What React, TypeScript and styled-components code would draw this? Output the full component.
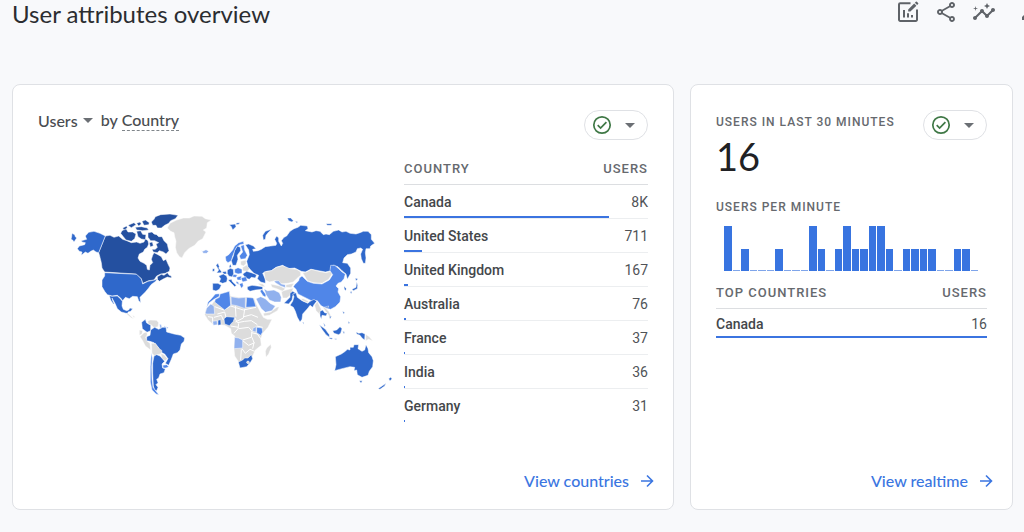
import React from "react";
import styled, { createGlobalStyle } from "styled-components";
import { MdInsights, MdOutlineShare } from "react-icons/md";

const GlobalStyle = createGlobalStyle`
  *, *::before, *::after { box-sizing: border-box; }
  body {
    margin: 0;
    background: #f8f9fb;
    color: #3c4043;
    font-family: Roboto, "Liberation Sans", sans-serif;
    font-size: 14px;
    overflow-x: hidden;
  }
  button { font: inherit; color: inherit; cursor: pointer; }
`;

const display = `font-family: "Google Sans", Lato, sans-serif;`;

const Page = styled.div`
  padding: 0 11px 22px 12px;
`;

const Header = styled.header`
  display: flex;
  justify-content: space-between;
  align-items: flex-start;
  height: 84px;
`;

const Title = styled.h1`
  ${display}
  margin: 0;
  font-size: 24px;
  line-height: 28px;
  font-weight: 400;
  color: #2b2d30;
`;

const Toolbar = styled.div`
  display: flex;
  gap: 12px;
  margin-right: -22px;
`;

const ToolButton = styled.button`
  display: block;
  width: 26px;
  height: 24px;
  padding: 0;
  border: 0;
  background: none;
  color: #5f6368;
  svg { display: block; width: 26px; height: 24px; }
`;

const Cards = styled.main`
  display: grid;
  grid-template-columns: minmax(0, 662fr) minmax(0, 323fr);
  gap: 16px;
`;

const Card = styled.section`
  display: flex;
  flex-direction: column;
  min-height: 426px;
  padding: 25px 25px 16px;
  background: #fff;
  border: 1px solid #dfe1e5;
  border-radius: 8px;
`;

const CardHead = styled.div`
  display: flex;
  justify-content: space-between;
  align-items: flex-start;
`;

const Heading = styled.h2`
  ${display}
  display: flex;
  margin: 0;
  font-size: 16px;
  line-height: 20px;
  font-weight: 500;
  color: #494c50;
`;

const MetricButton = styled.button`
  display: flex;
  align-items: center;
  gap: 5px;
  margin-right: 8px;
  padding: 0;
  border: 0;
  background: none;
`;

const Dimension = styled.span`
  margin-left: 4px;
  border-bottom: 1px dashed #80868b;
`;

const Caret = styled.span`
  width: 0;
  height: 0;
  border: 5px solid transparent;
  border-top-color: #6b6f74;
  border-bottom: 0;
`;

const StatusButton = styled.button`
  display: flex;
  align-items: center;
  justify-content: space-between;
  width: 64px;
  height: 30px;
  padding: 0 12px 0 7px;
  border: 1px solid #dfe1e5;
  border-radius: 15px;
  background: #fff;
  svg { display: block; }
`;

const Body = styled.div`
  display: flex;
  justify-content: space-between;
  align-items: flex-start;
  flex: 1;
  margin-top: 14px;
`;

const MapBox = styled.div`
  flex: 1;
  padding: 46px 4px 0 22px;
  svg { display: block; width: 100%; height: auto; }
`;

const Table = styled.table<{ $width: string }>`
  width: ${(p) => p.$width};
  border-collapse: separate;
  border-spacing: 0;
`;

const labelText = `
  line-height: 16px;
  font-weight: 500;
  letter-spacing: 1px;
  color: #66696e;
  text-transform: uppercase;
`;

const HeadCell = styled.th<{ $end?: boolean }>`
  ${labelText}
  font-size: 13px;
  height: 31px;
  padding: 0;
  text-align: ${(p) => (p.$end ? "right" : "left")};
  border-bottom: 1px solid #dcdee1;
`;

const Row = styled.tr<{ $height: number }>`
  position: relative;
  height: ${(p) => p.$height}px;
  th, td { padding: 0; border-bottom: 1px solid #eceef0; }
  &:last-child th, &:last-child td { border-color: transparent; }
`;

const NameCell = styled.th`
  text-align: left;
  font-weight: 500;
  color: #44474b;
`;

const ValueCell = styled.td`
  text-align: right;
  color: #505357;
`;

const Bar = styled.span`
  position: absolute;
  left: 0;
  bottom: 1px;
  height: 2px;
  min-width: 1px;
  background: #3b74e0;
`;

const Label = styled.h3`
  ${labelText}
  font-size: 12px;
  margin: 0;
`;

const Metric = styled.div`
  ${display}
  font-size: 38px;
  line-height: 52px;
  color: #202124;
`;

const Realtime = styled.div`
  padding-top: 4px;
  padding-bottom: 17px;
`;

const Minutes = styled.div`
  display: flex;
  align-items: flex-end;
  gap: 1px;
  height: 45px;
  margin: 11px 9px 7px 8px;
`;

const MinuteBar = styled.span<{ $users: number }>`
  flex: 1;
  height: ${(p) => (p.$users ? `${p.$users * 50}%` : "1px")};
  background: ${(p) => (p.$users ? "#3874e0" : "#7fa5ea")};
`;

const Footer = styled.footer`
  display: flex;
  justify-content: flex-end;
  margin: auto -6px 0 0;
`;

const FooterLink = styled.a`
  ${display}
  display: flex;
  align-items: center;
  gap: 11px;
  font-size: 16px;
  line-height: 24px;
  font-weight: 500;
  color: #3b76e1;
  text-decoration: none;
  svg { display: block; }
`;

const EditChartIcon = () => (
  <svg viewBox="0 0 24 24" fill="none" stroke="currentColor" strokeWidth="2" aria-hidden="true">
    <path d="M14.5 3.2H4.2a1.2 1.2 0 0 0-1.2 1.2v15.4A1.2 1.2 0 0 0 4.2 21h15.6a1.2 1.2 0 0 0 1.2-1.2V9.5" />
    <path d="M8 10v7.5M12 13.2v4.3M16 15v2.5" />
    <path d="M12.2 11.5v-2l6-6 2.2 2.2-6 5.8z" fill="currentColor" stroke="none" />
    <path d="M18.9 2.8l1-1q.5-.4 1 0l1.2 1.2q.5.5 0 1l-1 1z" fill="currentColor" stroke="none" />
  </svg>
);

const EditIcon = () => (
  <svg viewBox="0 0 24 24" fill="currentColor" aria-hidden="true">
    <path d="M12 20v-3l9-9 3 3-9 9z" />
  </svg>
);

const CheckIcon = () => (
  <svg width="20" height="20" viewBox="0 0 20 20" fill="none" stroke="#3f7846" strokeWidth="1.7" aria-hidden="true">
    <circle cx="10" cy="10" r="8.2" />
    <path d="M5.7 10.2l2.9 2.9 5.8-6" />
  </svg>
);

const ArrowIcon = () => (
  <svg width="14" height="14" viewBox="0 0 14 14" fill="none" stroke="currentColor" strokeWidth="1.6" aria-hidden="true">
    <path d="M1 7h11M7 1.5L12.5 7 7 12.5" />
  </svg>
);

const NAVY = "#2450a0";
const BLUE = "#2f68cb";
const MID = "#5086e8";
const LIGHT = "#91b1ee";
const GREY = "#dcdcdc";

type Region = [fill: string, d: string];

const americas: Region[] = [
  [NAVY, "M136 108L150 106 162 112 176 108 188 118 200 122 214 128 230 126 240 130 252 126 256 116 264 122 266 132 262 142 254 148 250 156 238 162 234 174 240 184 252 190 260 196 262 208 268 210 270 196 278 188 274 178 278 166 282 158 294 164 304 170 310 182 318 178 324 192 330 204 328 214 316 220 302 222 290 228 282 240 266 242 248 250 244 236 228 222 134 216 126 204 124 188 118 164 116 158Z"],
  [NAVY, "M292 230L304 223 312 226 322 218 328 226 334 228 334 234 322 231 308 238 298 244 292 238Z"],
  [NAVY, "M182 100L186 92 198 86 204 96 218 96 228 102 224 116 214 124 198 120 190 110Z"],
  [NAVY, "M204 76L222 68 228 74 214 83ZM230 70L240 66 244 72 236 78ZM246 64L256 60 268 68 266 74 252 76ZM226 82L244 80 262 84 266 90 248 92 230 90ZM230 94L242 92 248 103 258 104 256 119 244 117 234 110ZM268 128L277 126 280 137 271 141ZM188 84L200 78 202 84 192 90Z"],
  [NAVY, "M264 98L276 96 282 102 290 104 296 110 306 110 312 122 322 132 324 142 327 152 318 162 310 156 298 152 292 158 280 156 276 148 286 148 292 142 288 132 296 128 284 122 272 122 264 112Z"],
  [NAVY, "M274 66L282 58 286 50 302 44 330 42 354 46 346 56 332 62 326 70 314 76 304 84 292 84 288 76 278 76Z"],
  [BLUE, "M136 108L120 100 102 94 86 97 76 108 80 118 64 122 66 126 76 128 74 134 58 138 52 146 58 154 66 156 64 166 76 156 84 160 92 154 100 150 108 156 116 158Z"],
  [BLUE, "M36 100L44 104 46 110 50 114 42 126 38 120 33 118 35 110Z"],
  [BLUE, "M134 218L230 223 244 237 248 252 264 244 284 240 292 236 287 244 273 254 266 264 256 276 246 286 240 292 242 308 236 302 232 290 218 289 208 296 196 292 188 302 182 294 172 286 156 288 142 284 134 274 126 260 126 240 134 228Z"],
  [BLUE, "M148 287L156 289 172 288 181 296 187 304 186 318 190 328 200 332 206 330 210 324 218 326 212 334 204 336 203 341 184 336 172 326 166 312 156 294 158 302 163 312 160 312 152 300Z"],
];

const southAmerica: Region[] = [
  [BLUE, "M245 67L256 58 260 69 272 74 272 92 261 97 247 86Z"],
  [GREY, "M263 64L270 60 290 61 296 68 294 80 282 83 274 75 265 72Z"],
  [LIGHT, "M299 72L304 74 306 84 300 84ZM312 77L317 80 314 86ZM318 80L325 82 322 87Z"],
  [GREY, "M238 90L248 92 246 102 238 106ZM244 106L252 98 260 96 262 104 257 112 262 124 270 130 272 150 256 138 248 122 240 110Z"],
  [GREY, "M198 40L206 42 214 50 222 56 214 54 204 46ZM218 46L226 52 220 52Z"],
  [BLUE, "M260 110L270 106 272 90 284 82 296 88 308 82 318 82 320 96 342 102 362 106 374 114 372 124 364 132 360 150 352 158 340 162 334 178 326 196 316 190 324 176 314 162 302 156 296 144 282 128 270 124 260 122Z"],
  [GREY, "M274 130L286 130 298 146 306 152 304 162 292 164 284 168 276 160ZM302 160L312 164 322 176 316 182 306 176Z"],
  [BLUE, "M282 168L290 164 300 168 314 184 306 192 308 204 316 206 312 218 300 222 296 234 290 238 294 248 288 254 294 262 290 272 284 270 280 258 278 220 278 190Z"],
  [MID, "M274 158L277 174 275 200 276 236 279 262 290 276 297 285 288 282 276 270 271 246 271 200Z"],
  [MID, "M308 196L320 194 326 200 318 204 310 204Z"],
];

const europe: Region[] = [
  [GREY, "M-38 84L-30 70 -10 60 10 54 28 54 42 48 66 49 76 56 94 60 82 68 80 84 70 90 78 96 68 116 54 124 44 136 26 146 14 158 6 174 -2 170 -10 158 -14 142 -12 124 -16 110 -18 98 -28 94Z"],
  [LIGHT, "M64 151L68 154 78 149 86 154 80 160 70 160Z"],
  [BLUE, "M148 74L166 72 168 80 158 90 154 80ZM168 69L179 68 178 72 170 74Z"],
  [BLUE, "M250 120L248 106 256 94 276 87 266 96 258 106 256 118Z"],
  [MID, "M138 182L136 170 146 164 158 150 164 138 176 128 190 124 192 132 180 134 170 142 164 154 158 168 154 182 144 188Z"],
  [BLUE, "M158 196L154 182 160 168 164 152 172 138 181 142 182 152 172 166 174 178 168 196Z"],
  [MID, "M182 138L192 134 194 150 202 166 196 176 182 178 178 168 188 156Z"],
  [GREY, "M182 184L198 180 198 192 190 198 182 194ZM188 202L200 195 209 206 202 214 188 212Z"],
  [BLUE, "M188 222L200 214 214 218 230 224 226 234 214 232 208 238 196 234Z"],
  [MID, "M164 208L174 203 186 208 186 220 174 222 164 218Z"],
  [BLUE, "M142 210L151 205 160 208 161 222 157 231 146 228 142 220Z"],
  [BLUE, "M116 228L130 222 140 228 142 236 140 246 128 250 118 246 122 236Z"],
  [BLUE, "M98 250L114 250 124 256 118 268 108 273 98 270Z"],
  [BLUE, "M108 196L114 190 118 200 116 204 124 214 124 218 110 219 116 210ZM98 206L104 206 103 214 97 214ZM148 198L152 192 154 202 148 203Z"],
  [BLUE, "M144 240L154 238 158 246 169 256 164 260 154 250ZM126 216L138 214 140 222 132 222Z"],
  [MID, "M160 223L172 225 168 232 158 231ZM170 232L184 228 184 240 172 240ZM182 234L198 230 202 242 188 246Z"],
  [MID, "M170 244L176 248 176 254 168 248ZM178 252L188 248 190 258 184 265Z"],
  [BLUE, "M202 260L216 256 232 258 248 260 248 268 226 270 210 274 202 268Z"],
  [GREY, "M234 250L248 252 256 260 248 260 238 254Z"],
  [MID, "M240 273L246 268 258 284 256 292 248 286Z"],
  [LIGHT, "M252 266L262 272 282 270 298 278 304 292 302 306 284 306 268 300 258 284Z"],
];

const africa: Region[] = [
  [GREY, "M74 104L78 86 96 72 108 56 124 42 148 34 152 48 176 52 200 52 222 54 230 74 240 94 250 112 262 118 276 118 264 142 248 160 242 178 244 196 226 210 218 228 214 242 200 258 182 262 176 246 164 228 162 208 162 188 164 168 154 160 152 146 134 136 116 134 100 134 84 120Z"],
  [GREY, "M256 214L260 204 272 193 274 202 266 222 258 232ZM250 100L272 96 290 82 298 80 292 92 268 106 252 108Z"],
  [MID, "M120 42L148 34 150 52 152 76 134 90 104 66 106 58 118 52Z"],
  [MID, "M94 56L106 42 118 41 118 49 102 58 88 68 80 82 84 66Z"],
  [LIGHT, "M76 98L80 84 92 72 102 78 104 102 78 102Z"],
  [LIGHT, "M153 50L176 54 196 52 196 86 170 77 154 74Z"],
  [MID, "M200 52L220 54 228 80 198 82Z"],
  [LIGHT, "M228 56L242 50 256 56 270 70 286 78 276 92 256 97 244 86 236 72Z"],
  [BLUE, "M132 116L140 110 164 112 160 124 148 137 134 132Z"],
  [BLUE, "M114 121L122 119 123 134 114 136Z"],
  [LIGHT, "M98 124L111 122 112 134 100 136Z"],
  [MID, "M230 142L246 144 248 156 242 166 230 158Z"],
  [LIGHT, "M219 144L229 140 228 156 218 154Z"],
  [LIGHT, "M164 172L176 174 188 180 188 204 162 206Z"],
  [BLUE, "M175 246L188 240 194 234 204 234 214 224 218 236 212 246 200 260 180 264Z"],
];

const asia: Region[] = [
  [BLUE, "M-74 134L-64 132 -50 138 -42 146 -52 148 -50 154 -36 152 -26 148 -14 140 2 138 18 136 20 130 14 118 20 108 26 114 26 124 34 138 38 130 34 122 42 112 50 108 60 94 72 86 84 82 92 76 112 78 114 86 106 92 126 96 138 92 150 94 160 104 168 102 178 104 190 94 206 90 216 96 228 94 240 100 258 102 270 98 280 94 294 94 304 104 304 118 314 130 302 138 300 146 288 146 286 158 288 174 286 190 280 190 274 176 272 162 278 148 272 144 262 146 258 156 244 162 232 164 222 174 218 188 232 190 242 204 242 220 232 238 228 222 216 212 204 200 190 196 182 202 184 212 166 216 146 212 122 208 106 216 94 214 74 204 54 206 38 196 18 202 4 212 -10 214 -22 220 -14 238 -14 250 -28 246 -38 236 -34 226 -48 220 -58 210 -66 200 -70 184 -62 164 -64 150Z"],
  [BLUE, "M52 54L62 54 70 62 66 66 56 62ZM76 63L84 66 80 69ZM168 71L186 71 184 76 172 76Z"],
  [GREY, "M-18 216L4 212 20 202 38 197 60 206 80 208 92 216 92 226 80 236 70 246 54 250 30 252 16 242 -2 246 -14 240Z"],
  [GREY, "M98 218L110 216 124 208 146 214 168 218 182 214 186 222 176 238 156 250 130 248 112 242Z"],
  [GREY, "M2 252L30 258 46 266 38 274 20 266 6 262ZM34 274L56 268 70 264 64 284 50 294 38 294Z"],
  [LIGHT, "M12 243L26 242 34 252 46 254 46 263 32 258 16 248Z"],
  [GREY, "M48 254L72 250 64 263 48 262Z"],
  [MID, "M74 254L86 242 88 234 96 228 112 244 130 250 156 252 178 240 188 224 180 212 182 196 194 196 206 206 216 216 226 222 222 236 214 246 204 250 198 258 206 266 204 276 212 290 210 306 196 320 182 328 164 324 152 316 142 302 124 302 100 290 84 282 78 268 70 260Z"],
  [BLUE, "M260 245L263 256 262 266 250 272 246 268 258 262ZM256 234L264 237 258 242ZM222 258L229 266 227 272 223 268ZM240 276L246 274 244 282Z"],
];

const oceania: Region[] = [
  [BLUE, "M42 40L54 28 60 22 60 10 68 4 76 8 68 18 66 30 56 42Z"],
  [BLUE, "M60 46L68 34 72 20 68 12 78 8 82 22 96 32 114 40 120 34 132 28 140 34 132 44 128 52 120 46 114 54 98 72 96 88 90 96 82 82 76 64 70 52Z"],
  [GREY, "M92 26L100 26 116 34 112 38 98 32ZM134 46L142 34 150 50 154 58 150 68 154 82 146 70 138 62Z"],
  [GREY, "M158 50L166 54 176 64 184 80 178 88 176 76 164 60Z"],
  [BLUE, "M150 64L158 60 164 68 172 70 168 78 156 76 154 88 150 78ZM162 52L176 48 174 54ZM98 96L102 98 100 103Z"],
  [BLUE, "M148 104L156 110 166 118 178 134 178 142 168 134 156 118Z"],
  [BLUE, "M188 122L200 120 210 110 216 116 212 130 206 134 192 130ZM178 143L188 144 186 148 178 146ZM192 146L200 146 198 149ZM160 98L166 106 164 110ZM178 80L184 78 182 86Z"],
  [BLUE, "M218 64L224 68 220 72ZM234 94L240 98 236 101ZM218 124L224 126 222 132ZM258 126L266 130 276 128 285 132 284 150 276 144 270 136 260 132Z"],
  [GREY, "M287 133L298 140 308 152 296 148 287 152Z"],
  [BLUE, "M196 200L214 192 226 184 232 178 240 180 240 172 250 172 252 164 266 164 264 176 276 184 284 180 288 164 294 176 296 188 306 200 310 212 308 230 298 244 294 256 276 262 262 254 260 240 252 242 254 232 240 230 216 236 194 242 198 224Z"],
  [BLUE, "M268 272L277 272 273 280ZM356 266L362 262 366 266 360 273ZM324 296L336 288 348 280 344 288 330 298Z"],
];

const BORDERS =
  "M104 80L132 90 152 78 190 90 228 82M112 102L134 96 138 112M166 78L168 110M194 88L190 114 166 126M234 112L214 104 192 110M164 112L172 128 194 124 214 122 232 134M176 130L174 146 162 160M176 146L206 142 216 154 214 172 188 180M214 158L232 162 242 176M248 142L230 138M188 182L206 196 224 188M186 206L196 220 210 208 224 214M184 208L182 240M84 110L98 112 98 130M102 112L124 106 130 120M152 138L176 142M216 172L222 188 218 206";

const shapeGroups: { regions: Region[]; x: number; y: number }[] = [
  { regions: americas, x: 0, y: 0 },
  { regions: southAmerica, x: 0, y: 300 },
  { regions: europe, x: 360, y: 0 },
  { regions: asia, x: 630, y: 0 },
  { regions: oceania, x: 630, y: 270 },
];

const Shapes = ({ regions }: { regions: Region[] }) => (
  <>
    {regions.map(([fill, d], i) => (
      <path key={i} fill={fill} d={d} />
    ))}
  </>
);

const WorldMap = () => (
  <svg viewBox="0 0 1020 600" role="img" aria-label="Users by country" stroke="#fff" strokeWidth="1.5" strokeLinejoin="round">
    <g transform="translate(360 240)">
      <path fill={africa[0][0]} d={africa[0][1]} />
      <path fill="none" strokeWidth="3" d={BORDERS} />
      <Shapes regions={africa.slice(1)} />
      <circle cx="204" cy="247" r="4" fill={GREY} />
    </g>
    {shapeGroups.map((g, i) => (
      <g key={i} transform={`translate(${g.x} ${g.y})`}>
        <Shapes regions={g.regions} />
      </g>
    ))}
  </svg>
);

interface Entry {
  name: string;
  users: string;
  share: number;
}

const countries: Entry[] = [
  { name: "Canada", users: "8K", share: 84 },
  { name: "United States", users: "711", share: 7.4 },
  { name: "United Kingdom", users: "167", share: 1.7 },
  { name: "Australia", users: "76", share: 0.8 },
  { name: "France", users: "37", share: 0.4 },
  { name: "India", users: "36", share: 0.4 },
  { name: "Germany", users: "31", share: 0.3 },
];

const live: Entry[] = [{ name: "Canada", users: "16", share: 100 }];

const minutes = [2, 0, 1, 0, 0, 0, 1, 0, 0, 0, 2, 1, 0, 1, 2, 1, 1, 2, 2, 1, 0, 1, 1, 1, 1, 0, 0, 1, 1, 0];

interface CountryTableProps {
  heading: string;
  entries: Entry[];
  width: string;
  rowHeight: number;
}

const CountryTable = ({ heading, entries, width, rowHeight }: CountryTableProps) => (
  <Table $width={width}>
    <thead>
      <tr>
        <HeadCell scope="col">{heading}</HeadCell>
        <HeadCell scope="col" $end>Users</HeadCell>
      </tr>
    </thead>
    <tbody>
      {entries.map((e) => (
        <Row key={e.name} $height={rowHeight}>
          <NameCell scope="row">
            {e.name}
            <Bar style={{ width: `${e.share}%` }} />
          </NameCell>
          <ValueCell>{e.users}</ValueCell>
        </Row>
      ))}
    </tbody>
  </Table>
);

const Status = () => (
  <StatusButton type="button" aria-label="Data quality">
    <CheckIcon />
    <Caret />
  </StatusButton>
);

export default function App() {
  return (
    <>
      <GlobalStyle />
      <Page>
        <Header>
          <Title>User attributes overview</Title>
          <Toolbar>
            <ToolButton type="button" aria-label="Customize report"><EditChartIcon /></ToolButton>
            <ToolButton type="button" aria-label="Share"><MdOutlineShare /></ToolButton>
            <ToolButton type="button" aria-label="Insights"><MdInsights /></ToolButton>
            <ToolButton type="button" aria-label="Edit"><EditIcon /></ToolButton>
          </Toolbar>
        </Header>
        <Cards>
          <Card>
            <CardHead>
              <Heading>
                <MetricButton type="button">Users <Caret /></MetricButton>
                by <Dimension>Country</Dimension>
              </Heading>
              <Status />
            </CardHead>
            <Body>
              <MapBox><WorldMap /></MapBox>
              <CountryTable heading="Country" entries={countries} width="40%" rowHeight={34} />
            </Body>
            <Footer>
              <FooterLink href="#countries">View countries <ArrowIcon /></FooterLink>
            </Footer>
          </Card>
          <Card>
            <CardHead>
              <Realtime>
                <Label>Users in last 30 minutes</Label>
                <Metric>16</Metric>
              </Realtime>
              <Status />
            </CardHead>
            <Label>Users per minute</Label>
            <Minutes role="img" aria-label="Users per minute">
              {minutes.map((n, i) => (
                <MinuteBar key={i} $users={n} />
              ))}
            </Minutes>
            <CountryTable heading="Top countries" entries={live} width="100%" rowHeight={30} />
            <Footer>
              <FooterLink href="#realtime">View realtime <ArrowIcon /></FooterLink>
            </Footer>
          </Card>
        </Cards>
      </Page>
    </>
  );
}
